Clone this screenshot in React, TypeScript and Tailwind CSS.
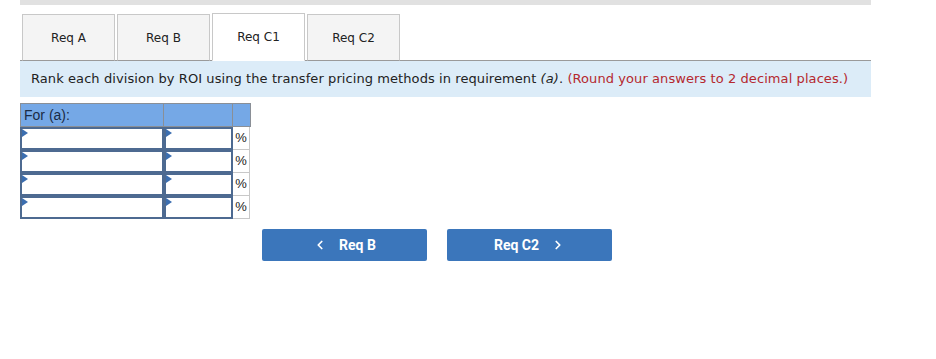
import { ChevronLeft, ChevronRight } from "lucide-react";

const tabs = ["Req A", "Req B", "Req C1", "Req C2"];

function Cell({ w }: { w: string }) {
  return (
    <div className={`relative h-[23px] ${w} border-2 border-[#4d6a91] bg-white`}>
      <span className="absolute left-0 top-0 h-0 w-0 border-y-[4px] border-l-[6px] border-y-transparent border-l-[#3b6eb0]" />
    </div>
  );
}

export default function App() {
  return (
    <div className="h-[359px] w-[936px] bg-white font-['DejaVu_Sans',sans-serif]">
      <div className="mx-[20px] w-[851px]">
        <div className="h-[5px] bg-[#e1e1e1]" />
        <div className="flex h-[56px] items-end gap-[2px] border-b border-[#9a9a9a] pl-[2px]">
          {tabs.map((t) => {
            const active = t === "Req C1";
            return (
              <div
                key={t}
                className={`-mb-px flex w-[93px] items-center justify-center border border-[#c8c8c8] text-[12px] text-[#222] ${
                  active ? "h-[48px] border-b-white border-[#a5a5a5] bg-white" : "h-[47px] border-b-[#9a9a9a] bg-[#f4f4f4]"
                }`}
              >
                {t}
              </div>
            );
          })}
        </div>
        <div className="flex h-[36px] items-center bg-[#dcecf8] pl-[11px] text-[13px] tracking-[0.08px] text-[#222]">
          <span>
            Rank each division by ROI using the transfer pricing methods in requirement <i>(a)</i>.{" "}
            <span className="text-[#b5282e]">(Round your answers to 2 decimal places.)</span>
          </span>
        </div>

        <div className="mt-[6px] w-[231px] font-['Liberation_Sans',sans-serif]">
          <div className="flex h-[24px] border border-[#8a8f96] bg-[#75a8e6]">
            <div className="flex w-[143px] items-center border-r border-[#8a8f96] pl-[3px] text-[14px] text-[#1a2b45]">
              For (a):
            </div>
            <div className="w-[69px] border-r border-[#8a8f96]" />
            <div className="flex-1" />
          </div>
          {[0, 1, 2, 3].map((i) => (
            <div key={i} className="flex h-[23px]">
              <Cell w="w-[144px]" />
              <Cell w="w-[69px]" />
              <div className="flex w-[17px] items-center justify-center border-b border-r border-[#c8c8c8] text-[13px] text-[#222]">
                %
              </div>
            </div>
          ))}
        </div>

        <div className="mt-[10px] flex gap-[20px] pl-[242px] font-['Roboto',sans-serif]">
          <button className="flex h-[32px] w-[165px] items-center justify-center gap-[12px] rounded-[2px] bg-[#3b76bb] text-[14px] font-bold text-white">
            <ChevronLeft size={14} strokeWidth={3} />
            Req B
          </button>
          <button className="flex h-[32px] w-[165px] items-center justify-center gap-[12px] rounded-[2px] bg-[#3b76bb] text-[14px] font-bold text-white">
            Req C2
            <ChevronRight size={14} strokeWidth={3} />
          </button>
        </div>
      </div>
    </div>
  );
}
